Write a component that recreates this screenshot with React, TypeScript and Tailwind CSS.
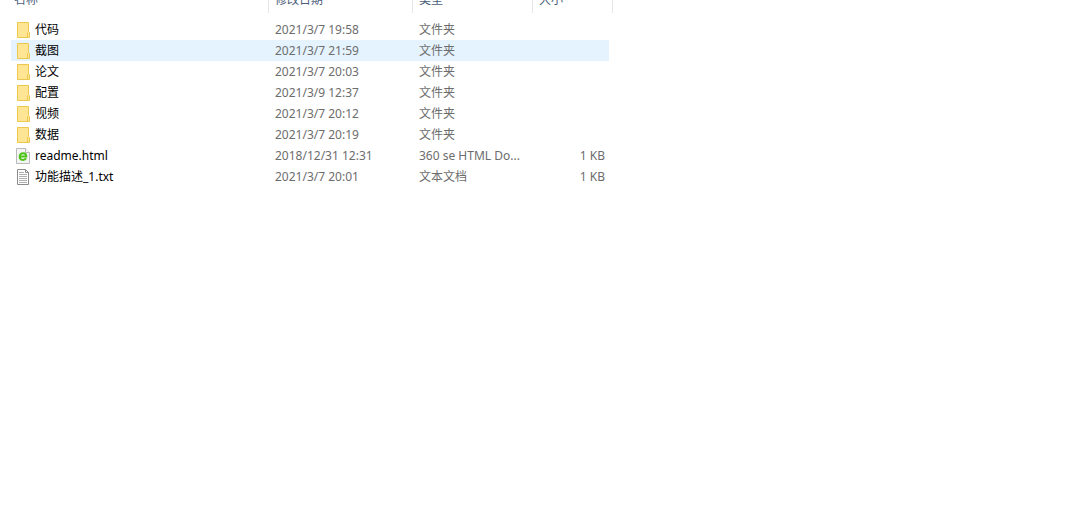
type IconKind = 'folder' | 'html' | 'text';

interface FileEntry {
  name: string;
  modified: string;
  type: string;
  size?: string;
  icon: IconKind;
}

const files: FileEntry[] = [
  { name: '代码', modified: '2021/3/7 19:58', type: '文件夹', icon: 'folder' },
  { name: '截图', modified: '2021/3/7 21:59', type: '文件夹', icon: 'folder' },
  { name: '论文', modified: '2021/3/7 20:03', type: '文件夹', icon: 'folder' },
  { name: '配置', modified: '2021/3/9 12:37', type: '文件夹', icon: 'folder' },
  { name: '视频', modified: '2021/3/7 20:12', type: '文件夹', icon: 'folder' },
  { name: '数据', modified: '2021/3/7 20:19', type: '文件夹', icon: 'folder' },
  { name: 'readme.html', modified: '2018/12/31 12:31', type: '360 se HTML Do...', size: '1 KB', icon: 'html' },
  { name: '功能描述_1.txt', modified: '2021/3/7 20:01', type: '文本文档', size: '1 KB', icon: 'text' },
];

const hoveredName = '截图';

function FileIcon({ kind }: { kind: IconKind }) {
  if (kind === 'folder') {
    return (
      <svg className="size-4 shrink-0" viewBox="0 0 16 16" aria-hidden="true">
        <path d="M1.5.5h11v9l1 1v5h-12z" fill="#ffe594" stroke="#edc84f" />
        <path d="M11.5 15v-4.500l1-1" fill="none" stroke="#edc84f" />
      </svg>
    );
  }

  if (kind === 'html') {
    return (
      <svg className="size-4 shrink-0" viewBox="0 0 16 16" aria-hidden="true">
        <path d="M.5.5h9l4 4v11H.5z" fill="#f4f4f4" stroke="#b9b9b9" />
        <path d="M9.5.5v4h4" fill="#fff" stroke="#b9b9b9" />
        <path
          d="M4 8.500h6.300c0-4.400-6.600-4.400-6.600 0 0 4.200 5 4.200 6.400 1.800"
          fill="none"
          stroke="#4cc417"
          strokeWidth="2"
        />
      </svg>
    );
  }

  return (
    <svg className="size-4 shrink-0" viewBox="0 0 16 16" aria-hidden="true">
      <path d="M1.5.5h8l3 3v12h-11z" fill="#fff" stroke="#8c8c8c" />
      <path d="M9.5.5v3h3" fill="none" stroke="#8c8c8c" />
      <path d="M3 3.500h5M3 5.500h8M3 7.500h8M3 9.500h8M3 11.500h8M3 13.500h8" stroke="#b0b0b0" />
    </svg>
  );
}

export default function App() {
  return (
    <main className="min-h-screen overflow-hidden bg-white pl-[11px] font-['Noto_Sans','Noto_Sans_CJK_SC',sans-serif] text-xs text-[#6d6d6d]">
      {/* 表头上半部分滚出窗口 */}
      <table className="-mt-3 w-[602px] table-fixed border-separate border-spacing-0 text-left">
        <colgroup>
          <col className="w-[258px]" />
          <col className="w-[144px]" />
          <col className="w-[120px]" />
          <col className="w-[80px]" />
        </colgroup>
        <thead className="text-[#4c607a]">
          <tr className="h-[25px]">
            <th className="border-r border-[#e5e5e5] pb-0.5 pl-[3px] font-normal">名称</th>
            <th className="border-r border-[#e5e5e5] pb-0.5 pl-1.5 font-normal">修改日期</th>
            <th className="border-r border-[#e5e5e5] pb-0.5 pl-1.5 font-normal">类型</th>
            <th className="border-r border-[#e5e5e5] pb-0.5 pl-1.5 font-normal">大小</th>
          </tr>
        </thead>
        <tbody className="before:block before:h-1.5">
          {files.map((file) => (
            <tr key={file.name} className={file.name === hoveredName ? 'h-[21px] bg-[#e5f3ff]' : 'h-[21px]'}>
              <td className="pl-[5px]">
                <div className="flex items-center gap-[3px] text-black">
                  <FileIcon kind={file.icon} />
                  <span>{file.name}</span>
                </div>
              </td>
              <td className="pl-1.5">{file.modified}</td>
              <td className="truncate pl-1.5">{file.type}</td>
              <td className="border-r-4 border-white pr-1 text-right">{file.size}</td>
            </tr>
          ))}
        </tbody>
      </table>
    </main>
  );
}
